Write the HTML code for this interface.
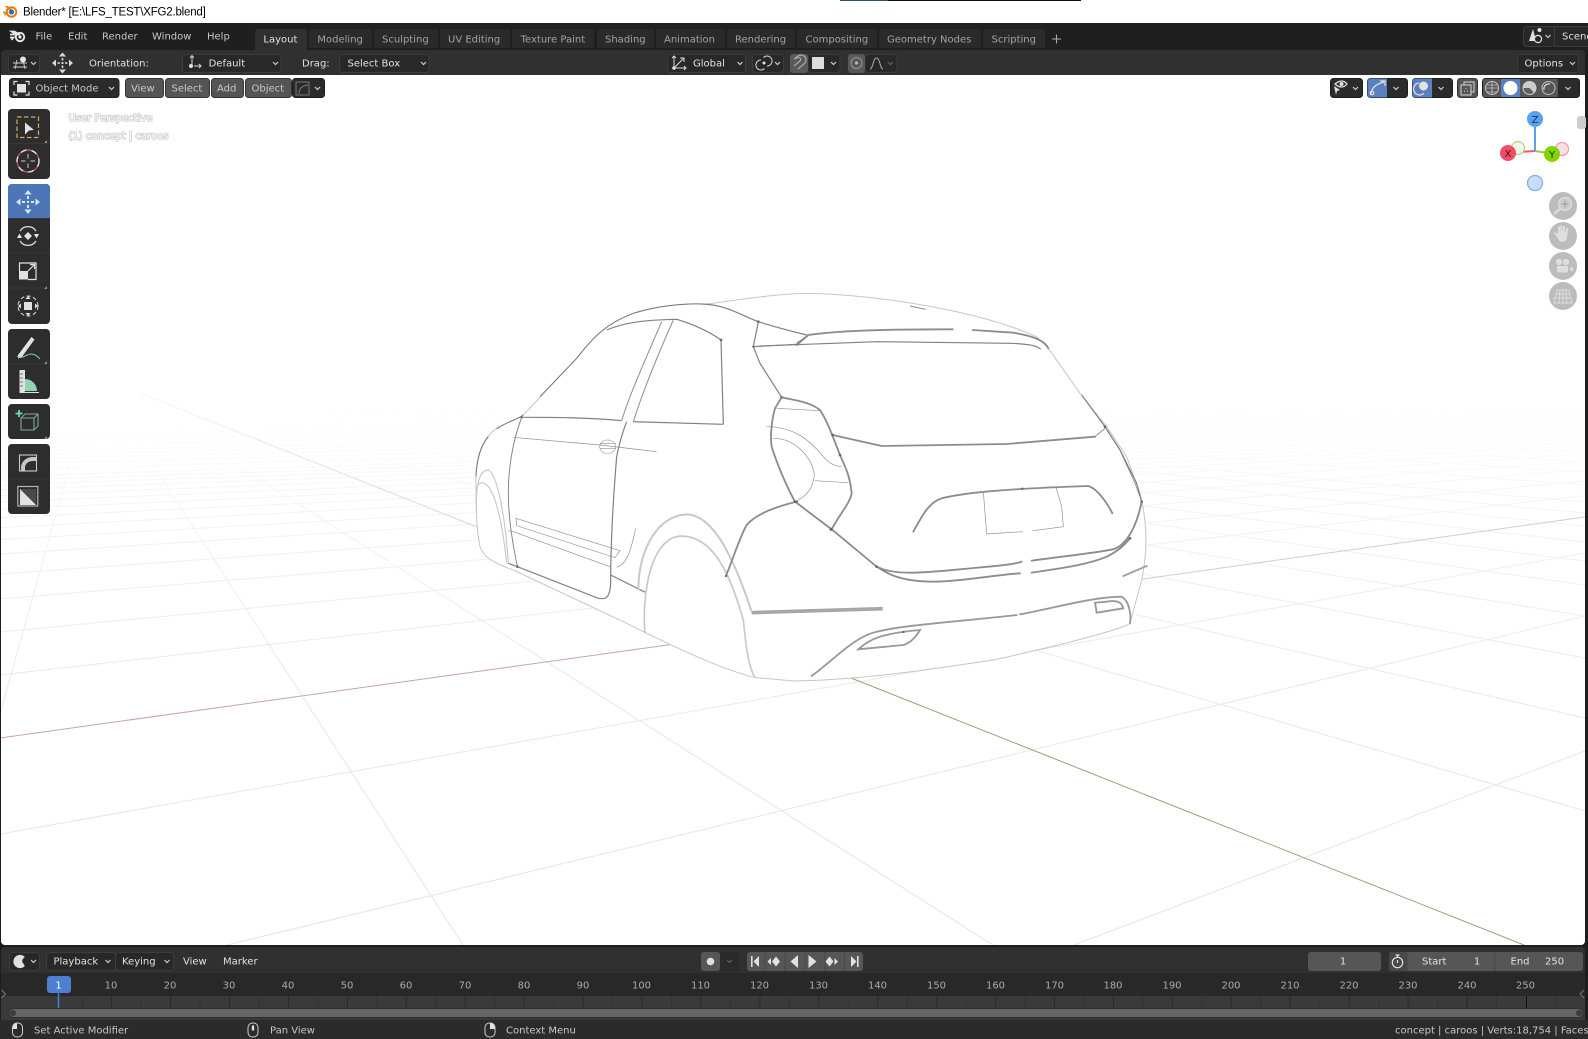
<!DOCTYPE html>
<html lang="en"><head><meta charset="utf-8"><title>Blender</title>
<style>
html,body{margin:0;padding:0;background:#1d1d1d;width:1588px;height:1039px;overflow:hidden}
svg{display:block;position:absolute;left:0;top:0}
text{font-family:"DejaVu Sans","Liberation Sans",sans-serif;font-size:10px;fill:#c8c8c8;white-space:pre}
.d{fill:#a3a3a3}.w{fill:#e2e2e2}.r{fill:#aaa;text-anchor:middle}.c{text-anchor:middle}
.ch{fill:none;stroke:#cfcfcf;stroke-width:1.2}
.dd{fill:#282828;stroke:#3c3c3c;stroke-width:1}
.b{fill:#2b2b2b;stroke:#1e1e1e;stroke-width:1}
.g{fill:#555;stroke:#333;stroke-width:1}
.i{fill:none;stroke:#e2e2e2;stroke-width:1.2}
.i1{fill:none;stroke:#d8d8d8;stroke-width:1}
.f{fill:#e2e2e2}
.o{fill:#fff;stroke:#c6c6c6;stroke-width:3}
.k{fill:none;stroke:#8c8c8c;stroke-width:5.5;stroke-linecap:round}
.m{fill:none;stroke:#808080;stroke-width:3.6}
.l{fill:none;stroke:#c8c8c8;stroke-width:6}
.n{fill:none;stroke:#8e8e8e;stroke-width:2}
.nav{fill:#bcbcbc}
.dot{fill:#666}
</style></head><body>
<svg width="1588" height="1039" viewBox="0 0 1588 1039" xmlns="http://www.w3.org/2000/svg">
<defs>
<linearGradient id="gr" gradientUnits="userSpaceOnUse" x1="0" y1="395" x2="0" y2="945">
<stop offset="0" stop-color="#fff"/><stop offset=".09" stop-color="#fcfcfc"/><stop offset=".22" stop-color="#f3f3f3"/><stop offset=".5" stop-color="#e9e9e9"/><stop offset="1" stop-color="#e4e4e4"/>
</linearGradient>
<linearGradient id="gc" gradientUnits="userSpaceOnUse" x1="140" y1="390" x2="477" y2="527">
<stop offset="0" stop-color="#f6f6f6"/><stop offset="1" stop-color="#d8d4d2"/>
</linearGradient>
<clipPath id="vp"><path d="M1 75H1585V941a4 4 0 0 1-4 4H5a4 4 0 0 1-4-4Z"/></clipPath>
</defs>

<!-- base -->
<rect width="1588" height="1039" fill="#1d1d1d"/>
<rect width="1588" height="23" fill="#fff"/>
<rect x="840" y="0" width="48" height="1" fill="#2a5070"/><rect x="888" y="0" width="193" height="1" fill="#111"/>
<rect x="0" y="23" width="1588" height="27" fill="#1f1f1f"/>
<path d="M1 75V54a4 4 0 0 1 4-4H1581a4 4 0 0 1 4 4V75Z" fill="#303030"/>

<!-- title -->
<g transform="translate(10,11)">
<path d="M-7-1.5H-1L-5.5-5H-2.5L3-1" fill="#e87d0d"/><path d="M-7 1.5-3 1.5-5.5 4" fill="none" stroke="#e87d0d" stroke-width="1.6"/>
<circle cx="1.5" cy="1" r="4.8" fill="none" stroke="#e87d0d" stroke-width="2"/><circle cx="1.5" cy="1" r="2.6" fill="#2d6eab"/>
</g>
<text x="23" y="15.5" style="font-family:'Liberation Sans',sans-serif;font-size:11.5px;fill:#000;letter-spacing:-.2px">Blender* [E:\LFS_TEST\XFG2.blend]</text>

<!-- top menu -->
<g transform="translate(18,36)">
<path d="M-8-1.5H-2L-6.5-4.5H-3.5L2-1M-8 1.5H-4.5L-6.5 4" fill="none" stroke="#e8e8e8" stroke-width="1.7"/>
<circle cx="2" cy="1" r="4.2" fill="none" stroke="#e8e8e8" stroke-width="1.9"/><circle cx="2" cy="1" r="1.6" fill="#e8e8e8"/>
</g>
<text x="35.5" y="39.6">File</text><text x="68" y="39.6">Edit</text><text x="102" y="39.6">Render</text><text x="152" y="39.6">Window</text><text x="207" y="39.6">Help</text>

<g fill="#2a2a2a">
<path d="M255 48V32a3 3 0 0 1 3-3H304a3 3 0 0 1 3 3V48Z" fill="#303030"/>
<path d="M309 48V32a3 3 0 0 1 3-3H369a3 3 0 0 1 3 3V48Z"/>
<path d="M374 48V32a3 3 0 0 1 3-3H435a3 3 0 0 1 3 3V48Z"/>
<path d="M440 48V32a3 3 0 0 1 3-3H507a3 3 0 0 1 3 3V48Z"/>
<path d="M512 48V32a3 3 0 0 1 3-3H591a3 3 0 0 1 3 3V48Z"/>
<path d="M597 48V32a3 3 0 0 1 3-3H651a3 3 0 0 1 3 3V48Z"/>
<path d="M656 48V32a3 3 0 0 1 3-3H722a3 3 0 0 1 3 3V48Z"/>
<path d="M727 48V32a3 3 0 0 1 3-3H792a3 3 0 0 1 3 3V48Z"/>
<path d="M797 48V32a3 3 0 0 1 3-3H874a3 3 0 0 1 3 3V48Z"/>
<path d="M879 48V32a3 3 0 0 1 3-3H978a3 3 0 0 1 3 3V48Z"/>
<path d="M983 48V32a3 3 0 0 1 3-3H1042a3 3 0 0 1 3 3V48Z"/>
</g>
<rect x="255" y="48" width="52" height="2" fill="#303030"/>
<text x="263.4" y="42.6" class="w">Layout</text>
<text class="d" x="317.4" y="42.6">Modeling</text><text class="d" x="382" y="42.6">Sculpting</text><text class="d" x="448" y="42.6">UV Editing</text><text class="d" x="520.6" y="42.6">Texture Paint</text><text class="d" x="605" y="42.6">Shading</text><text class="d" x="664" y="42.6">Animation</text><text class="d" x="735" y="42.6">Rendering</text><text class="d" x="805.5" y="42.6">Compositing</text><text class="d" x="887" y="42.6">Geometry Nodes</text><text class="d" x="991.5" y="42.6">Scripting</text>
<path d="M1052 39h9M1056.500 34.500v9" stroke="#a8a8a8" stroke-width="1.1" fill="none"/>

<!-- scene -->
<rect x="1523.500" y="26.500" width="31" height="20" rx="3" class="dd"/>
<rect x="1554.500" y="26.500" width="40" height="20" fill="#282828" stroke="#3c3c3c"/>
<path d="M1529 41 1533 29 1536 41Z" class="f"/><circle cx="1539.500" cy="30" r="2" class="f"/><circle cx="1538" cy="39" r="3.600" class="i" style="fill:#252525"/>
<path class="ch" d="M1545.500 35l2.500 2.500 2.500-2.500"/>
<text x="1562" y="39.600" class="w">Scene</text>

<!-- tool settings -->
<rect x="8.500" y="54.500" width="31" height="18" rx="3" class="dd"/>
<path d="M13 63h14M13 67h14M17 60l-2 9M23 60l2 9" fill="none" stroke="#cfcfcf" stroke-width=".9"/><circle cx="23" cy="59.500" r="3" class="f"/>
<path class="ch" d="M31 62l2.500 2.500 2.500-2.500"/>
<g fill="#d8d8d8"><path d="M62.500 52.500l3.500 4h-7ZM62.500 73.500l3.500-4h-7ZM52 63l4-3.500v7ZM73 63l-4-3.500v7Z"/><path d="M61.700 58h1.600v2.500h-1.600ZM61.700 65.500h1.600v2.500h-1.600ZM57.500 62.200h2.500v1.600h-2.500ZM65 62.200h2.500v1.600H65ZM61.500 62h2v2h-2Z"/></g>
<text x="89" y="66.400" class="w">Orientation:</text>
<rect x="182.500" y="54.500" width="98.500" height="18" rx="3" class="dd"/>
<path d="M192 65V55.500M190 58l2-2.500 2 2.500M194 66h7M199 64l2 2-2 2" class="i1"/><circle cx="191" cy="66" r="2" class="f"/>
<text x="208.600" y="66.400" class="w">Default</text><path class="ch" d="M273 62l2.500 2.500 2.500-2.500"/>
<text x="302" y="66.400" class="w">Drag:</text>
<rect x="339.500" y="54.500" width="89.500" height="18" rx="3" class="dd"/>
<text x="347.500" y="66.400" class="w">Select Box</text><path class="ch" d="M421 62l2.500 2.500 2.500-2.500"/>

<rect x="667.500" y="54.500" width="78" height="18" rx="3" class="dd"/>
<path d="M674 56V68H686M674 68 684 58M672 58l2-2 2 2M684 66l2 2-2 2M680 58h4v4" class="i1"/><circle cx="674" cy="68" r="1.800" class="f"/>
<text x="693" y="66.400" class="w">Global</text><path class="ch" d="M737.500 62l2.500 2.500 2.500-2.500"/>
<rect x="752.500" y="54.500" width="31" height="18" rx="3" class="dd"/>
<path d="M763.500 57.500a5 5 0 1 1 3.500 8.500M764.500 68.500a5 5 0 1 1-3.500-8.500" class="i1"/><circle cx="764" cy="63" r="1.500" class="f"/>
<path class="ch" d="M775 62l2.500 2.500 2.500-2.500"/>
<rect x="808" y="54.500" width="32" height="18" rx="3" class="dd"/>
<rect x="790" y="54" width="18" height="19" rx="3" fill="#5a5a5a"/>
<path d="M794 66 800 61a2 2 0 0 0-3-3l-1 1M798 69l7-6a5 5 0 0 0-7-7l-4 3" fill="none" stroke="#a8a8a8" stroke-width="1.200"/>
<rect x="812" y="57" width="12" height="12" fill="#dcdcdc"/>
<path class="ch" d="M831 62l2.500 2.500 2.500-2.500"/>
<rect x="865" y="54.500" width="32" height="18" rx="3" class="dd"/>
<rect x="848" y="54" width="17" height="19" rx="3" fill="#585858"/>
<circle cx="856.500" cy="63" r="5.500" fill="none" stroke="#8c8c8c" stroke-width="1.300"/><circle cx="856.500" cy="63" r="1.500" fill="#c0c0c0"/>
<path d="M870 69c3 0 3-11 6.500-11s3.500 11 6.500 11" fill="none" stroke="#a0a0a0" stroke-width="1.100"/>
<path d="M888 62l2.500 2.500 2.500-2.500" fill="none" stroke="#666" stroke-width="1.200"/>
<rect x="1517.500" y="54.500" width="61" height="18" rx="3" class="dd"/>
<text x="1524.500" y="66.400" class="w">Options</text><path class="ch" d="M1570 62l2.500 2.500 2.500-2.500"/>

<!-- viewport -->
<g clip-path="url(#vp)">
<rect x="1" y="75" width="1584" height="870" fill="#fff"/>
<path fill="none" stroke="url(#gr)" stroke-width="1" d="
M0 675L1585 495.500M0 632L1585 480.900M0 599L1585 469.600M0 574L1585 461.100M0 554L1585 454.300M0 539.600L1585 449.400M0 527.700L1585 445.400M0 517.700L1585 442M0 509.200L1585 439.100M0 501.800L1585 436.600M0 495.400L1585 434.400M0 489.800L1585 432.500M0 484.800L1585 430.800M0 480.400L1585 429.300M0 476.400L1585 428M0 469.600L1585 425.600M0 463.900L1585 423.700M0 459.100L1585 422.100M0 455L1585 420.700M0 451.500L1585 419.500M0 445.700L1585 417.500M0 441.100L1585 416M0 437.500L1585 414.700M0 434.400L1585 413.700
M0 834L1585 553M227 945L1585 616M1074 945L1585 751
M95 375L0 714M95 375L463 945M95 375L993 945
M95 375L1585 811M95 375L1585 718M95 375L1585 658M95 375L1585 616M95 375L1585 585M95 375L1585 561M95 375L1585 542M95 375L1585 526M95 375L1585 513M95 375L1585 502M95 375L1585 485M95 375L1585 472M95 375L1585 461.500M95 375L1585 453M95 375L1585 446M95 375L1585 436M95 375L1585 428M95 375L1585 422M95 375L1585 417M95 375L1585 413"/>
<path d="M140 393 477 527" stroke="url(#gc)" fill="none"/>
<path d="M851 678 1524 945" stroke="#93a37a" fill="none"/>
<path d="M0 738 700 640.500" stroke="#c7a3aa" fill="none"/>
<path d="M1100 585 1585 517" stroke="#d9c9cd" fill="none"/>
</g>

<!-- car -->
<g transform="translate(460,280) scale(.33333)">
<path class="o" d="M48 620C45 540 60 480 110 445C140 425 170 420 190 405L350 235C400 170 440 130 520 100C590 78 670 70 740 72C820 62 950 40 1050 40C1250 45 1550 90 1730 170L1765 205 1860 340 1940 440 2000 530 2040 640C2060 720 2065 800 2045 900L2010 1030C1990 1045 1850 1085 1600 1140C1400 1170 1200 1200 1000 1203L880 1192C800 1170 700 1130 500 1030L160 870C100 850 70 830 60 800C50 750 48 700 48 620Z"/>
<path class="n" style="stroke-width:3;stroke:#777" d="M48 590C50 540 60 500 85 470M110 447C140 425 170 420 190 405M240 350L350 235C400 170 440 130 520 100C590 78 670 70 725 72"/>
<path class="m" d="M725 72C800 75 830 100 895 125C940 140 980 150 1040 165"/>
<path class="m" d="M895 125 880 200 900 250 965 352M880 200 1010 193M1010 190 1045 165"/>
<path class="m" d="M185 412C280 412 380 412 485 422M520 425 790 433M790 433 783 180C740 150 690 130 650 118C560 120 500 125 440 150"/>
<path class="n" style="stroke-width:3" d="M605 125C560 230 510 340 485 422M640 120C600 210 550 330 520 425"/>
<path class="m" style="stroke-width:2.800" d="M185 412C160 480 145 560 145 640C145 720 160 800 172 860"/>
<path class="m" d="M145 850 172 860 415 955C440 960 450 950 452 910C452 800 460 650 470 530C480 480 490 450 500 425"/>
<path class="n" d="M158 472 420 495 590 515"/>
<ellipse cx="443" cy="500" rx="24" ry="20" class="n" stroke-dasharray="4 1"/><path class="n" d="M420 490h48M420 505h48"/>
<path class="n" d="M168 715 480 812 465 833 170 737ZM145 752 160 755 450 860M527 745C515 800 505 850 470 862"/>
<path class="m" d="M452 885 556 937"/>
<path class="l" d="M535 930C535 800 600 705 680 703C760 705 820 830 875 995"/>
<path class="l" d="M555 1060C545 950 570 770 665 768C760 770 810 880 850 1020C858 1100 865 1160 885 1193" style="stroke-width:5"/>
<path class="l" style="stroke-width:3.500" d="M50 700C45 610 60 570 85 570C110 580 135 700 145 850M48 640C50 600 70 605 85 620C110 650 130 750 140 850"/>
<path class="k" d="M798 888C825 820 840 770 860 735C890 700 950 680 1010 665"/>
<path d="M875 998 1268 986" stroke="#a6a6a6" stroke-width="11" fill="none"/>
<circle class="dot" cx="895" cy="125" r="4"/><circle class="dot" cx="965" cy="352" r="4.500"/><circle class="dot" cx="880" cy="200" r="3.500"/><circle class="dot" cx="783" cy="180" r="4"/><circle class="dot" cx="172" cy="860" r="4"/><circle class="dot" cx="185" cy="412" r="3.500"/><circle class="dot" cx="798" cy="888" r="3.500"/><circle class="dot" cx="1010" cy="665" r="4"/>
</g>
<g transform="translate(760,280) scale(.33333)">
<path class="k" d="M65 352C100 360 150 365 180 390C200 420 215 460 240 525C260 570 270 590 275 640C270 670 240 700 215 748"/>
<path class="k" d="M65 352 45 385C35 420 30 470 35 500C50 550 80 620 105 665L215 748 350 860C380 880 420 905 520 905C600 905 700 885 780 880"/>
<path class="n" d="M50 385 180 392M20 440C100 440 150 480 190 530C210 555 230 558 245 560M40 475C110 475 160 540 163 585C160 625 140 650 105 665M165 602 265 608"/>
<path class="k" d="M218 465 365 498 740 492 1005 470"/>
<path class="n" style="stroke-width:3" d="M1005 470 1035 445"/>
<path class="m" d="M965 345 1035 440 1080 510 1130 610 1145 665"/>
<path class="n" style="stroke:#777" d="M1040 450 1075 500 1100 555 1125 610 1140 650"/>
<path class="k" d="M145 165C250 150 400 148 578 148M638 150 760 158C800 165 850 175 865 205M110 195 145 165"/>
<path class="m" d="M0 198 350 185 750 190C800 192 830 195 842 208"/>
<path class="n" d="M450 78 497 88" style="stroke-width:3"/>
<path class="n" d="M670 635 680 762 788 755M818 752 910 740 905 680 888 622"/>
<path class="k" d="M460 755C490 700 510 665 545 655C620 635 780 625 985 618C1010 625 1040 665 1057 700"/>
<path class="k" d="M355 862C400 885 480 880 600 868C680 860 760 855 785 845M815 842C900 830 1000 820 1060 808C1100 795 1130 740 1145 665M815 878C900 865 980 855 1040 830C1070 815 1090 800 1110 775"/>
<path class="k" style="stroke:#a0a0a0" d="M1090 888 1160 858"/>
<path class="k" style="stroke:#999" d="M155 1188C220 1140 280 1075 340 1058C420 1035 600 1025 770 1005M780 1003C880 985 1000 950 1085 950C1105 960 1115 1000 1110 1030"/>
<path class="k" style="stroke:#999" d="M295 1108C330 1075 370 1060 480 1050C465 1075 450 1090 430 1095ZM1005 968 1010 998 1090 985C1085 965 1070 960 1040 965Z"/>
<circle class="dot" cx="213" cy="748" r="4.500"/><circle class="dot" cx="218" cy="465" r="4"/><circle class="dot" cx="105" cy="665" r="4"/><circle class="dot" cx="1035" cy="440" r="4"/><circle class="dot" cx="1145" cy="665" r="4"/><circle class="dot" cx="787" cy="626" r="3.500"/><circle class="dot" cx="350" cy="860" r="4"/><circle class="dot" cx="1110" cy="775" r="4"/><circle class="dot" cx="240" cy="525" r="4"/><circle class="dot" cx="430" cy="1056" r="3.500"/>
</g>

<!-- viewport header -->
<rect x="9.500" y="78.500" width="109.500" height="19" rx="3" class="b"/>
<path d="M14 85v-3.500h3.500M25.500 81.500H29V85M29 91.500V95h-3.500M17.500 95H14v-3.500" class="i"/><rect x="17" y="84" width="9" height="8.500" class="f"/>
<text x="35.500" y="91.600">Object Mode</text><path class="ch" d="M109 87l2.500 2.500 2.500-2.500"/>
<rect x="125.500" y="78.500" width="38" height="19" rx="3" class="g"/><text x="131" y="91.600">View</text>
<rect x="165.500" y="78.500" width="44" height="19" rx="3" class="g"/><text x="171.500" y="91.600">Select</text>
<rect x="211.500" y="78.500" width="32" height="19" rx="3" class="g"/><text x="217" y="91.600">Add</text>
<rect x="245.500" y="78.500" width="46" height="19" rx="3" class="g"/><text x="251.500" y="91.600">Object</text>
<rect x="292.500" y="78.500" width="32" height="19" rx="3" class="b"/>
<path d="M296 82h13v13h-13ZM299 94c0-6 3-8 9-9" fill="none" stroke="#777" stroke-width="1"/><path class="ch" d="M315 87l2.500 2.500 2.500-2.500"/>

<text x="68.500" y="121" style="fill:#fafafa;stroke:#d0d0d0;stroke-width:1.600px;paint-order:stroke">User Perspective</text>
<text x="68.500" y="139" style="fill:#fafafa;stroke:#d0d0d0;stroke-width:1.600px;paint-order:stroke">(1) concept | caroos</text>

<rect x="1330.500" y="78.500" width="32" height="19" rx="3" class="b"/>
<path d="M1335 84q7-6 12 0q-5 6-12 0Z" class="i"/><circle cx="1341.500" cy="84" r="2" class="f"/><path d="M1334 86l6 4-3 1-1 4Z" class="f"/>
<path class="ch" d="M1353 87l2.500 2.500 2.500-2.500"/>
<rect x="1367.500" y="78.500" width="40" height="19" rx="3" class="b"/><path d="M1367.500 81.500a3 3 0 0 1 3-3h16.500v19h-16.500a3 3 0 0 1-3-3Z" fill="#5a80c0"/>
<path d="M1371 95C1371 88 1376 84 1384 82M1380 81h5v5" class="i"/><circle cx="1372" cy="93" r="1.800" class="i"/>
<path class="ch" d="M1393.500 87l2.500 2.500 2.500-2.500"/>
<rect x="1412.500" y="78.500" width="40" height="19" rx="3" class="b"/><path d="M1412.500 81.500a3 3 0 0 1 3-3h16.500v19h-16.500a3 3 0 0 1-3-3Z" fill="#5a80c0"/>
<circle cx="1423.500" cy="86" r="4.500" class="f"/><path d="M1419 83a6 6 0 1 0 5 10" class="i"/>
<path class="ch" d="M1438.500 87l2.500 2.500 2.500-2.500"/>
<rect x="1457.500" y="78.500" width="20" height="19" rx="3" class="g"/>
<path d="M1461 85v10h10V85ZM1464 85v-3h10v10h-3" class="i1"/><path d="M1464 91h1M1467 91h1M1466 88v1" class="i1"/>
<rect x="1482.500" y="78.500" width="97" height="19" rx="3" class="b"/>
<rect x="1483" y="79" width="18" height="18" rx="2" fill="#565656"/><rect x="1501" y="79" width="19" height="18" fill="#5a80c0"/><rect x="1520" y="79" width="19" height="18" fill="#565656"/><rect x="1539" y="79" width="19" height="18" fill="#565656"/>
<circle cx="1492" cy="88" r="6.500" fill="none" stroke="#c4c4c4"/><path d="M1486 88h12M1492 82v13M1487 85h10M1487 92h10" stroke="#c4c4c4" stroke-width=".8" fill="none"/>
<circle cx="1510.500" cy="88" r="7" fill="#fff"/>
<circle cx="1529.500" cy="88" r="6.500" fill="#5f5f5f" stroke="#cfcfcf" stroke-width="1"/><path d="M1529.500 81.500a6.500 6.500 0 0 0-6.500 6.500h6.500l4.500 4.500a6.500 6.500 0 0 0-4.500-11Z" fill="#ccc"/>
<circle cx="1548.500" cy="88" r="6.500" fill="#555" stroke="#c0c0c0"/><path d="M1544 90a5 5 0 0 1 6-6" stroke="#ddd" fill="none" stroke-width="1.200"/>
<path class="ch" d="M1565.500 87l2.500 2.500 2.500-2.500"/>

<!-- gizmo -->
<path d="M1535 151V126" stroke="#5ea2ec" stroke-width="2"/><path d="M1535 151 1511 152.500" stroke="#ef5a6e" stroke-width="2"/><path d="M1535 151 1548 153" stroke="#97c95a" stroke-width="2"/>
<circle cx="1518" cy="148" r="6.500" fill="#f1f6e6" stroke="#b0d686" stroke-width="1.200"/>
<circle cx="1562" cy="149" r="6.500" fill="#fbdfe3" stroke="#f09aa8" stroke-width="1.200"/>
<circle cx="1535" cy="183" r="7.500" fill="#c8def8" stroke="#78aff0" stroke-width="1.200"/>
<circle cx="1535" cy="119" r="8" fill="#5aa2f0"/><circle cx="1508" cy="153" r="8" fill="#f24d66"/><circle cx="1552" cy="154" r="8" fill="#80d400"/>
<text x="1535" y="123" class="c" style="fill:#17325a">Z</text><text x="1508" y="157" class="c" style="fill:#4a1018">X</text><text x="1552" y="158" class="c" style="fill:#233a00">Y</text>
<rect x="1577" y="116" width="9" height="13" rx="3" fill="#cdcdcd"/>
<circle cx="1563" cy="206" r="14" class="nav"/><circle cx="1563" cy="236" r="14" class="nav"/><circle cx="1563" cy="266" r="14" class="nav"/><circle cx="1563" cy="296" r="14" class="nav"/>
<circle cx="1565" cy="204" r="6.500" fill="#cdcdcd" stroke="#dedede" stroke-width="1.200"/><path d="M1565 200.500v7M1561.500 204h7" stroke="#999"/><path d="M1560 209 1554 214" stroke="#dedede" stroke-width="2.400"/>
<path d="M1557 237l-3-4 1-1 3 2v-7.500h1.800l.4 6v-7h2l.3 7 .5-6.500h2l.2 7 1.200-5h1.800l-1 9c-.5 3-2 5-5 5s-4-2-5-5Z" fill="#dedede"/>
<circle cx="1559" cy="262" r="3.200" fill="#dedede"/><circle cx="1566" cy="262" r="3.200" fill="#dedede"/><rect x="1557" y="266" width="11" height="6.500" rx="1" fill="#dedede"/><path d="M1569 269l4-2.500v5Z" fill="#dedede"/>
<path d="M1557 290h12l3 13h-18ZM1552.500 298h19M1556 294h14M1560 290l-1 13M1566 290l1 13M1563 290v13" fill="none" stroke="#dedede" stroke-width=".9"/>

<!-- toolbar -->
<g fill="#2d2d2d">
<rect x="8" y="109" width="42" height="70" rx="4"/><rect x="8" y="184" width="42" height="140" rx="4"/><rect x="8" y="329" width="42" height="70" rx="4"/><rect x="8" y="404" width="42" height="35" rx="4"/><rect x="8" y="444" width="42" height="70" rx="4"/>
</g>
<path d="M8 143.500h42M8 253h42M8 288h42M8 364h42M8 479h42M8 218.500h42" stroke="#363636"/>
<path d="M8 218V188a4 4 0 0 1 4-4H46a4 4 0 0 1 4 4V218Z" fill="#4d75b8"/>
<g fill="#8e8e8e"><path d="M47 140l-3 3h3ZM47 286l-3 3h3ZM47 361l-3 3h3ZM47 436l-3 3h3Z"/></g>

<rect x="17" y="117" width="21.500" height="20.500" fill="none" stroke="#d2aa6c" stroke-width="1.200" stroke-dasharray="4.500 2.500"/>
<path d="M25 122.500 34 130 29 130.500 25 134.500Z" class="f"/>
<circle cx="28" cy="161" r="11" fill="none" stroke="#e6e6e6" stroke-width="1.400" stroke-dasharray="6 5"/>
<circle cx="28" cy="161" r="11" fill="none" stroke="#c0505a" stroke-width="1.400" stroke-dasharray="5 6" stroke-dashoffset="-6"/>
<path d="M28 154v4.500M28 163.500v4.500M21 161h4.500M30.500 161h4.500" stroke="#ccc" fill="none"/>

<g fill="#d8e6fa"><path d="M28 190 31.500 194.500h-7ZM28 214 31.500 209.500h-7ZM16 202l4.500-3.500v7ZM40 202l-4.500-3.500v7Z"/><path d="M27 196h2v3h-2ZM27 205h2v3h-2ZM22 201h3v2h-3ZM31 201h3v2h-3ZM27 201h2v2h-2Z"/></g>
<path d="M20 231a9.500 9.500 0 0 1 16 0M36 241a9.500 9.500 0 0 1-16 0" class="i"/><path d="M28 232l4 4-4 4-4-4ZM17 238l2.500-4.500 2.500 4.500ZM34 234l2.500 4.500 2.500-4.500Z" class="f"/>
<path d="M19.500 271v-8H36v16.500H28" class="i"/><rect x="19" y="271" width="9" height="8.500" class="f"/><path d="M28 271l6-6M30 264.500h4.500V269" class="i"/>
<circle cx="28" cy="306" r="10" fill="none" stroke="#ddd" stroke-dasharray="4 2.500"/><rect x="24" y="302" width="8" height="8" class="f"/><path d="M28 296l2.500 3h-5ZM28 316l2.500-3h-5ZM18 306l3-2.500v5ZM38 306l-3-2.500v5Z" class="f"/>

<path d="M18 355 31.500 337l3 2.500-13 18-3.500 1Z" class="f"/><path d="M17 356c5 4 9-2 14-2 4 0 6 2 9 5" fill="none" stroke="#7fc7a0" stroke-width="1.100"/>
<path d="M19.500 370h5.500v22h14v1H19.500Z" class="f"/><path d="M25 379A12 12 0 0 1 37 391H25Z" fill="#8fd6b0"/><path d="M20 374h3M20 378h3M20 382h3M20 386h3M25 391v1M29 391v1M33 391v1" stroke="#555" stroke-width=".8"/>
<path d="M21 418h13v12H21ZM21 418l4-4h13v12l-4 4M34 418l4-4" fill="none" stroke="#7ba898" stroke-width="1.100"/><path d="M19 410v7M15.500 413.500h7" stroke="#6fdcaa" stroke-width="1.800"/>
<rect x="19.500" y="455" width="17" height="16" fill="none" stroke="#c8c8c8" stroke-width="1.100"/><path d="M25 471v-3c0-4 3-7 8-7h3.500v-4H33c-7 0-12 5-12 11v3Z" fill="#c6c6c6"/>
<rect x="17.800" y="486.500" width="20" height="19.500" fill="none" stroke="#b4b4b4" stroke-width="1.200"/><path d="M20 489H36V505Z" fill="#4a4a4a"/><path d="M20 489 36 505H20Z" fill="#e2e2e2"/>

<!-- timeline -->
<path d="M1 973V951a4 4 0 0 1 4-4H1581a4 4 0 0 1 4 4V973Z" fill="#303030"/>
<rect x="1" y="973" width="1584" height="23" fill="#282828"/>
<rect x="1" y="996" width="1584" height="24" fill="#3a3a3a"/>
<rect x="0" y="1020" width="1588" height="19" fill="#2b2b2b"/>
<path fill="none" stroke="#333" d="M82.200 996v22M141.100 996v22M200 996v22M259 996v22M317.900 996v22M376.800 996v22M435.700 996v22M494.700 996v22M553.600 996v22M612.500 996v22M671.500 996v22M730.400 996v22M789.300 996v22M848.300 996v22M907.200 996v22M966.100 996v22M1025 996v22M1084 996v22M1142.900 996v22M1201.800 996v22M1260.800 996v22M1319.700 996v22M1378.600 996v22M1437.600 996v22M1496.500 996v22M1555.400 996v22"/>
<path fill="none" stroke="#2a2a2a" d="M111.600 996v22M170.600 996v22M229.500 996v22M288.400 996v22M347.400 996v22M406.300 996v22M465.200 996v22M524.100 996v22M583.100 996v22M642 996v22M700.900 996v22M759.900 996v22M818.800 996v22M877.700 996v22M936.700 996v22M995.600 996v22M1054.500 996v22M1113.400 996v22M1172.400 996v22M1231.300 996v22M1290.200 996v22M1349.200 996v22M1408.100 996v22M1467 996v22"/>
<path d="M1526.500 996v12" stroke="#111"/>
<rect x="9" y="1008.500" width="1574" height="9" rx="4.500" fill="#666" stroke="#303030"/>
<circle cx="13" cy="1013" r="3" fill="#3c3c3c"/><circle cx="1579" cy="1013" r="3" fill="#3c3c3c"/>
<path d="M1.500 990l4 4-4 4" fill="none" stroke="#777"/><path d="M1584 990l-4 4 4 4" fill="none" stroke="#777"/>

<rect x="9.500" y="952.500" width="30" height="18" rx="3" class="dd"/>
<circle cx="20" cy="961.500" r="6.600" fill="#e0e0e0"/><path d="M26.800 956.500a6 6 0 0 0-4.800 5l3.500 5.500 3-5Z" fill="#282828"/><path class="ch" d="M31 960l2.500 2.500 2.500-2.500"/>
<rect x="46.500" y="952.500" width="69" height="18" rx="3" class="dd"/><rect x="115.500" y="952.500" width="58" height="18" rx="3" class="dd"/>
<text x="53.500" y="964.600" class="w">Playback</text><path class="ch" d="M105.500 960l2.500 2.500 2.500-2.500"/>
<text x="122" y="964.600" class="w">Keying</text><path class="ch" d="M164.500 960l2.500 2.500 2.500-2.500"/>
<text x="183" y="964.600" class="w">View</text><text x="223" y="964.600" class="w">Marker</text>

<rect x="701" y="952" width="19" height="19" rx="3" fill="#565656"/><rect x="720" y="952" width="19" height="19" rx="3" fill="#2b2b2b"/>
<circle cx="710.500" cy="961.500" r="3.800" fill="#e0e0e0"/><path d="M727 960l2.500 2.500 2.500-2.500" fill="none" stroke="#666"/>
<rect x="747" y="952" width="116" height="19" rx="3" fill="#565656"/>
<path d="M765 952v19M785 952v19M805 952v19M825 952v19M844.500 952v19" stroke="#484848"/>
<g fill="#e2e2e2"><path d="M751 956h1.600v11H751ZM759 956v11l-5.500-5.500ZM767.500 961.500l3.500-3.500v7ZM776 956.500l4 5-4 5-4-5ZM798 955v13l-7.500-6.500ZM808.500 955v13l8-6.500ZM838 961.500l-3.500-3.500v7ZM829.500 956.500l4 5-4 5-4-5ZM851 956v11l5.500-5.500ZM857 956h1.600v11H857Z"/></g>

<rect x="1308" y="952" width="73" height="19" rx="3" fill="#565656"/>
<text x="1343" y="964.600" class="c w">1</text>
<rect x="1389" y="952" width="194" height="19" rx="3" fill="#565656"/>
<rect x="1389" y="952" width="18" height="19" rx="3" fill="#484848"/>
<path d="M1407 952v19M1495 952v19" stroke="#484848"/>
<circle cx="1397.500" cy="962.500" r="5.200" class="i"/><path d="M1395.500 955h4M1397.500 955v2.500M1397.500 960v3" class="i"/>
<text x="1422" y="964.600" class="w">Start</text><text x="1477" y="964.600" class="c w">1</text>
<text x="1510.500" y="964.600" class="w">End</text><text x="1554.600" y="964.600" class="c w">250</text>

<rect x="47" y="976" width="24" height="17" rx="3" fill="#4d7fd0"/>
<path d="M58.500 993v15" stroke="#4d7fd0" stroke-width="1.500"/>
<text x="58.500" y="988.600" class="c w" style="fill:#fff">1</text>
<text class="r" x="111" y="988.600">10</text><text class="r" x="170" y="988.600">20</text><text class="r" x="229" y="988.600">30</text><text class="r" x="288" y="988.600">40</text><text class="r" x="347" y="988.600">50</text><text class="r" x="406" y="988.600">60</text><text class="r" x="465" y="988.600">70</text><text class="r" x="524" y="988.600">80</text><text class="r" x="583" y="988.600">90</text><text class="r" x="641.500" y="988.600">100</text><text class="r" x="700.500" y="988.600">110</text><text class="r" x="759.500" y="988.600">120</text><text class="r" x="818.500" y="988.600">130</text><text class="r" x="877.500" y="988.600">140</text><text class="r" x="936.500" y="988.600">150</text><text class="r" x="995.500" y="988.600">160</text><text class="r" x="1054.500" y="988.600">170</text><text class="r" x="1113" y="988.600">180</text><text class="r" x="1172" y="988.600">190</text><text class="r" x="1231" y="988.600">200</text><text class="r" x="1290" y="988.600">210</text><text class="r" x="1349" y="988.600">220</text><text class="r" x="1408" y="988.600">230</text><text class="r" x="1467" y="988.600">240</text><text class="r" x="1525.500" y="988.600">250</text>

<!-- status -->
<g fill="none" stroke="#cfcfcf" stroke-width="1">
<rect x="12.500" y="1023" width="10" height="14" rx="4.500"/><rect x="248" y="1023" width="10" height="14" rx="4.500"/><rect x="485" y="1023" width="10" height="14" rx="4.500"/>
</g>
<path d="M13 1029v-2a4 4 0 0 1 4-4v6ZM251.800 1025.500h2.400v5h-2.400ZM490 1023a4 4 0 0 1 4.500 4v2H490Z" class="f"/>
<text x="34" y="1033.600">Set Active Modifier</text>
<text x="270" y="1033.600">Pan View</text>
<text x="506" y="1033.600">Context Menu</text>
<text x="1395" y="1033.600">concept | caroos | Verts:18,754 | Faces:18,120</text>
</svg>
</body></html>
